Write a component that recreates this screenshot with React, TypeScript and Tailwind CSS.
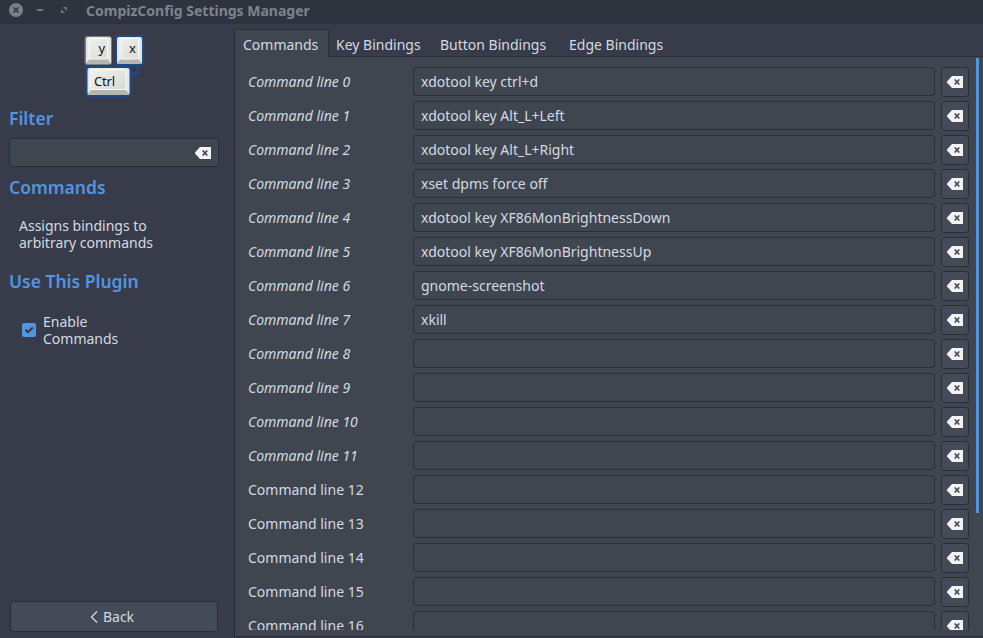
import React from "react";

const commands = [
  "xdotool key ctrl+d",
  "xdotool key Alt_L+Left",
  "xdotool key Alt_L+Right",
  "xset dpms force off",
  "xdotool key XF86MonBrightnessDown",
  "xdotool key XF86MonBrightnessUp",
  "gnome-screenshot",
  "xkill",
  "", "", "", "", "", "", "", "", "",
];

function ClearIcon({ hole = "#444a58" }: { hole?: string }) {
  return (
    <svg width="16" height="12" viewBox="0 0 16 12" className="block shrink-0">
      <path d="M5 0H16V12H5L0 6.5V5.5Z" fill="#f2f2f2" />
      <path d="M7.7 3.5L12.3 8.5M12.3 3.5L7.7 8.5" stroke={hole} strokeWidth="1.7" />
    </svg>
  );
}

function KeysLogo() {
  return (
    <svg width="64" height="64" viewBox="0 0 64 64" className="block">
      <defs>
        <linearGradient id="face" x1="0" y1="0" x2="1" y2="1">
          <stop offset="0" stopColor="#f1f1ee" />
          <stop offset="1" stopColor="#d8dad4" />
        </linearGradient>
      </defs>
      <path d="M55 32C56 39 53 43 47 42" fill="none" stroke="#204a87" strokeWidth="2.5" />
      <rect x="1.5" y="3" width="27.5" height="29" rx="3" fill="#7d7e7b" />
      <rect x="32" y="2" width="29" height="31" rx="4" fill="#204a87" />
      <rect x="2" y="33" width="46.500" height="31" rx="4" fill="#204a87" />
      <rect x="3" y="4" width="25" height="27" rx="2" fill="#e6e6e2" />
      <path d="M3 30L7 26H24L28 30L27 31H4Z" fill="#b4b6b0" />
      <rect x="6" y="5.500" width="18.500" height="20.500" rx="2" fill="url(#face)" stroke="#fafafa" />
      <rect x="34" y="4" width="25" height="27" rx="2" fill="#e6e6e2" />
      <path d="M34 30L38 26H55L59 30L58 31H35Z" fill="#b4b6b0" />
      <rect x="37" y="5.500" width="18.500" height="20.500" rx="2" fill="url(#face)" stroke="#fafafa" />
      <rect x="4.500" y="35" width="42" height="27" rx="2" fill="#e6e6e2" />
      <path d="M4.500 61L8.500 57H42.500L46.500 61L45.500 62H5.500Z" fill="#b4b6b0" />
      <rect x="7.500" y="36.500" width="35.500" height="20" rx="2" fill="url(#face)" stroke="#fafafa" />
      <text x="15.500" y="20" fontSize="13" fontFamily="Noto Sans, sans-serif" fill="#111">y</text>
      <text x="46" y="20" fontSize="13" fontFamily="Noto Sans, sans-serif" fill="#111">x</text>
      <text x="11" y="53" fontSize="13" textLength="21" fontFamily="Noto Sans, sans-serif" fill="#111">Ctrl</text>
    </svg>
  );
}

const heading = "whitespace-nowrap text-[17.5px] font-semibold leading-6 text-[#5294e2]";

export default function App() {
  return (
    <div className="flex h-[638px] w-[983px] flex-col overflow-hidden bg-[#383b49] font-['Noto_Sans','Open_Sans',sans-serif] text-[14px] text-[#d3dae3]">
      <header className="flex h-6 shrink-0 items-start bg-[#2f333d]">
        <svg width="72" height="24" viewBox="0 0 72 24" className="block shrink-0">
          <circle cx="16" cy="10" r="7" fill="#7a7f88" />
          <path d="M13.500 7.500L18.500 12.500M18.500 7.500L13.500 12.500" stroke="#2f333d" strokeWidth="1.600" />
          <path d="M37 10H43" stroke="#7a7f88" strokeWidth="1.800" />
          <path d="M63 7H67V11ZM61 9V13H65Z" fill="#6d727c" />
        </svg>
        <h1 className="ml-[14px] whitespace-nowrap text-[14px] font-bold leading-[22px] tracking-[0px] text-[#7d838e]">CompizConfig Settings Manager</h1>
      </header>

      <div className="flex min-h-0 flex-1">
        <aside className="flex w-[234px] shrink-0 flex-col pl-[9px]">
          <div className="ml-[74px] mt-[9px] h-[64px]"><KeysLogo /></div>
          <h2 className={heading + " mt-[9px]"}>Filter</h2>
          <div className="mt-2 flex h-[29px] w-[210px] items-center justify-end rounded-[3px] border border-[#2b2e39] bg-[#404650] pr-[7px]">
            <ClearIcon hole="#404650" />
          </div>
          <h2 className={heading + " mt-2"}>Commands</h2>
          <p className="ml-[10px] mt-[18px] whitespace-nowrap leading-[17px]">Assigns bindings to<br />arbitrary commands</p>
          <h2 className={heading + " mt-[18px]"}>Use This Plugin</h2>
          <label className="ml-[13px] mt-5 flex items-center gap-[7px] leading-[17px]">
            <svg width="14" height="14" viewBox="0 0 14 14" className="block">
              <rect width="14" height="14" rx="2" fill="#5294e2" />
              <path d="M3.500 6.800L6 9.200L10.800 4.500" fill="none" stroke="#2f343f" strokeWidth="2" />
            </svg>
            <span>Enable<br />Commands</span>
          </label>
          <button className="mb-[6px] ml-px mt-auto flex h-[31px] w-[208px] items-center justify-center gap-[5px] rounded-[3px] border border-[#2b2e39] bg-[#444a58] pr-[4px]">
            <svg width="8" height="12" viewBox="0 0 8 12" className="block"><path d="M7 .5L1.500 6L7 11.500" fill="none" stroke="#d3dae3" strokeWidth="1.300" /></svg>
            <span>Back</span>
          </button>
        </aside>

        <main className="flex min-w-0 flex-1 flex-col">
          <nav className="flex h-[33px] shrink-0 pt-[5px]">
            <div className="h-7 w-[95px] shrink-0 border-x border-t border-[#2b2e39] bg-[#404650] pl-2 leading-[29px]">Commands</div>
            <div className="flex h-7 flex-1 border-b border-[#2b2e39] pl-[7px] leading-[32px]">
              <span className="w-[104px] whitespace-nowrap">Key Bindings</span>
              <span className="w-[129px] whitespace-nowrap">Button Bindings</span>
              <span className="whitespace-nowrap">Edge Bindings</span>
            </div>
          </nav>
          <section className="mb-px flex min-h-0 flex-1 border-b border-l border-[#2b2e39] bg-[#404650] pb-[6px]">
            <div className="flex min-h-0 w-[734px] flex-col gap-1 overflow-hidden pl-[13px] pt-[10px]">
              {commands.map((value, i) => (
                <div key={i} className="flex h-[30px] shrink-0 items-start">
                  <span className={"w-[165px] whitespace-nowrap leading-[29px]" + (i < 12 ? " italic" : "")}>Command line {i}</span>
                  <div className="h-[29px] w-[522px] whitespace-nowrap rounded-[3px] border border-[#2b2e39] bg-[#404650] pl-[7px] leading-[27px]">{value}</div>
                  <button className="ml-[6px] flex h-[30px] w-7 items-center justify-center rounded-[3px] border border-[#2b2e39] bg-[#444a58]"><ClearIcon /></button>
                </div>
              ))}
            </div>
            <div className="ml-[7px] mt-px h-[455px] w-[3px] bg-[#5294e2]" />
          </section>
        </main>
      </div>
    </div>
  );
}
